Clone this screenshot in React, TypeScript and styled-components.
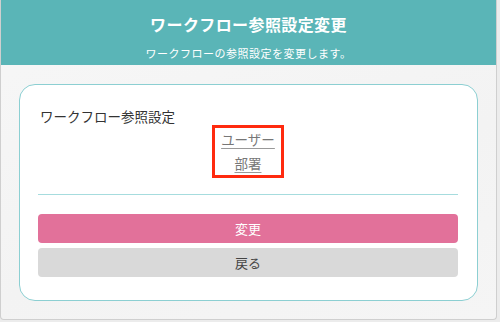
import styled, { createGlobalStyle } from 'styled-components'

const GlobalStyle = createGlobalStyle`
  html, body {
    margin: 0;
    padding: 0;
    background: #ececec;
    font-family: "Noto Sans CJK JP", "Noto Sans", sans-serif;
  }
`

const Frame = styled.div`
  width: 495px;
  height: 319px;
  border: 1px solid #cfcfcf;
  border-top: none;
  border-radius: 0 0 4px 4px;
  background: linear-gradient(160deg, #f7f7f7 0%, #f3f3f3 60%, #f5f5f5 100%);
  display: flex;
  flex-direction: column;
  overflow: hidden;
`

const Header = styled.header`
  height: 65px;
  background: #5ab5b7;
  color: #fff;
  display: flex;
  flex-direction: column;
  align-items: center;
  box-sizing: border-box;
  padding-top: 12px;
`

const Title = styled.h1`
  margin: 0;
  font-size: 16px;
  font-weight: 700;
  letter-spacing: 0.4px;
  line-height: 24px;
`

const Subtitle = styled.p`
  margin: 9px 0 0;
  font-size: 11px;
  letter-spacing: 0.5px;
  line-height: 16px;
`

const Content = styled.main`
  padding: 19px 18px 0 18px;
`

const Card = styled.section`
  width: 459px;
  height: 217px;
  box-sizing: border-box;
  border: 1px solid #8ccfd2;
  border-radius: 16px;
  background: #fff;
  padding: 21px 19px 0 18px;
  display: flex;
  flex-direction: column;
`

const Label = styled.div`
  padding-left: 2px;
  font-size: 13.5px;
  color: #333;
  line-height: 20px;
`

const Choices = styled.div`
  align-self: center;
  margin-top: -1px;
  border: 3px solid #ff2a0f;
  padding: 0 6px;
  display: flex;
  flex-direction: column;
  align-items: center;
`

const ChoiceLink = styled.a`
  font-size: 13.5px;
  line-height: 23.5px;
  color: #777;
  text-decoration: underline;
  text-decoration-color: #999;
  text-underline-offset: 3px;
  cursor: pointer;
`

const Divider = styled.hr`
  margin: 16px 0 0;
  border: none;
  border-top: 1px solid #a6dcde;
`

const Buttons = styled.div`
  margin-top: 19px;
  display: flex;
  flex-direction: column;
  gap: 5px;
`

const Button = styled.button<{ $primary?: boolean }>`
  height: 29px;
  border: none;
  border-radius: 4px;
  font-family: inherit;
  font-size: 13px;
  background: ${(p) => (p.$primary ? '#e2719a' : '#d9d9d9')};
  color: ${(p) => (p.$primary ? '#fff' : '#444')};
  cursor: pointer;
`

export default function App() {
  return (
    <>
      <GlobalStyle />
      <Frame>
        <Header>
          <Title>ワークフロー参照設定変更</Title>
          <Subtitle>ワークフローの参照設定を変更します。</Subtitle>
        </Header>
        <Content>
          <Card>
            <Label>ワークフロー参照設定</Label>
            <Choices>
              <ChoiceLink>ユーザー</ChoiceLink>
              <ChoiceLink>部署</ChoiceLink>
            </Choices>
            <Divider />
            <Buttons>
              <Button $primary>変更</Button>
              <Button>戻る</Button>
            </Buttons>
          </Card>
        </Content>
      </Frame>
    </>
  )
}
